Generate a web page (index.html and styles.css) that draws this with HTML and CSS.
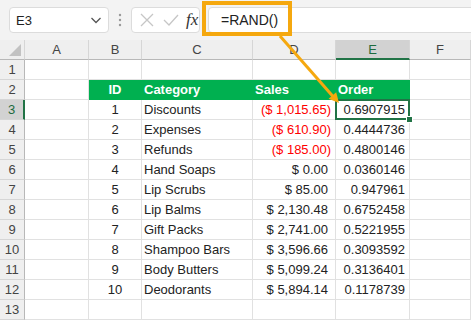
FILE: index.html
```html
<!DOCTYPE html>
<html lang="en">
<head>
    <meta charset="UTF-8">
    <meta name="viewport" content="width=device-width, initial-scale=1.0">
    <title>RAND order</title>
    <link rel="stylesheet" href="styles.css">
</head>
<body>
    <div class="toolbar">
        <div class="namebox">
            <span>E3</span>
            <svg class="chev" width="12" height="8" viewBox="0 0 12 8"><path d="M1.5 2 L6 6.5 L10.5 2" fill="none" stroke="#555" stroke-width="1.3"/></svg>
        </div>
        <div class="grip">
            <svg width="4" height="14" viewBox="0 0 4 14"><circle cx="2" cy="2" r="1.2" fill="#999"/><circle cx="2" cy="7" r="1.2" fill="#999"/><circle cx="2" cy="12" r="1.2" fill="#999"/></svg>
        </div>
        <div class="fxbox">
            <svg width="14" height="14" viewBox="0 0 14 14"><path d="M1 1 L13 13 M13 1 L1 13" stroke="#c6c6c6" stroke-width="1.3"/></svg>
            <svg width="16" height="14" viewBox="0 0 16 14"><path d="M1 7 L6 12 L15 2" fill="none" stroke="#c6c6c6" stroke-width="1.3"/></svg>
            <span class="fx">fx</span>
        </div>
        <div class="formula">=RAND()</div>
    </div>

    <div class="sheet">
        <div class="h corner"></div>
        <div class="h">A</div><div class="h">B</div><div class="h">C</div><div class="h">D</div><div class="h sel">E</div><div class="h">F</div>

        <div class="r">1</div><div class="c"></div><div class="c"></div><div class="c"></div><div class="c"></div><div class="c"></div><div class="c"></div>

        <div class="r">2</div><div class="c"></div>
        <div class="c g mid">ID</div><div class="c g">Category</div><div class="c g">Sales</div><div class="c g">Order</div><div class="c"></div>

        <div class="r sel">3</div><div class="c"></div>
        <div class="c mid">1</div><div class="c">Discounts</div><div class="c num neg">($ 1,015.65)</div><div class="c num active">0.6907915</div><div class="c"></div>

        <div class="r">4</div><div class="c"></div>
        <div class="c mid">2</div><div class="c">Expenses</div><div class="c num neg">($ 610.90)</div><div class="c num">0.4444736</div><div class="c"></div>

        <div class="r">5</div><div class="c"></div>
        <div class="c mid">3</div><div class="c">Refunds</div><div class="c num neg">($ 185.00)</div><div class="c num">0.4800146</div><div class="c"></div>

        <div class="r">6</div><div class="c"></div>
        <div class="c mid">4</div><div class="c">Hand Soaps</div><div class="c num pos">$ 0.00</div><div class="c num">0.0360146</div><div class="c"></div>

        <div class="r">7</div><div class="c"></div>
        <div class="c mid">5</div><div class="c">Lip Scrubs</div><div class="c num pos">$ 85.00</div><div class="c num">0.947961</div><div class="c"></div>

        <div class="r">8</div><div class="c"></div>
        <div class="c mid">6</div><div class="c">Lip Balms</div><div class="c num pos">$ 2,130.48</div><div class="c num">0.6752458</div><div class="c"></div>

        <div class="r">9</div><div class="c"></div>
        <div class="c mid">7</div><div class="c">Gift Packs</div><div class="c num pos">$ 2,741.00</div><div class="c num">0.5221955</div><div class="c"></div>

        <div class="r">10</div><div class="c"></div>
        <div class="c mid">8</div><div class="c">Shampoo Bars</div><div class="c num pos">$ 3,596.66</div><div class="c num">0.3093592</div><div class="c"></div>

        <div class="r">11</div><div class="c"></div>
        <div class="c mid">9</div><div class="c">Body Butters</div><div class="c num pos">$ 5,099.24</div><div class="c num">0.3136401</div><div class="c"></div>

        <div class="r">12</div><div class="c"></div>
        <div class="c mid">10</div><div class="c">Deodorants</div><div class="c num pos">$ 5,894.14</div><div class="c num">0.1178739</div><div class="c"></div>

        <div class="r">13</div><div class="c"></div><div class="c"></div><div class="c"></div><div class="c"></div><div class="c"></div><div class="c"></div>
    </div>

    <!-- callout drawn over the sheet -->
    <svg class="callout" width="471" height="320" viewBox="0 0 471 320">
        <rect x="204" y="3" width="86" height="31" fill="none" stroke="#f5a80f" stroke-width="4"/>
        <line x1="280" y1="36" x2="333" y2="96.5" stroke="#f5a80f" stroke-width="3"/>
        <polygon points="339,103 328.6,98.8 336.2,92.2" fill="#f5a80f"/>
    </svg>
</body>
</html>
```

FILE: styles.css
```css
body {
    margin: 0;
    width: 471px;
    height: 320px;
    overflow: hidden;
    position: relative;
    background: #f3f3f3;
    font-family: "Liberation Sans", Arial, sans-serif;
    color: #222;
}
.toolbar {
    display: flex;
    align-items: center;
    height: 40px;
    padding-left: 9px;
    box-sizing: border-box;
}
.namebox {
    width: 100px;
    height: 26px;
    box-sizing: border-box;
    background: white;
    border: 1px solid #dcdcdc;
    border-radius: 4px;
    display: flex;
    align-items: center;
    justify-content: space-between;
    padding: 0 6px 0 6px;
    font-size: 13px;
}
.grip {
    width: 22px;
    display: flex;
    justify-content: center;
}
.fxbox {
    width: 69px;
    height: 26px;
    box-sizing: border-box;
    background: white;
    border: 1px solid #dcdcdc;
    border-radius: 4px;
    display: flex;
    align-items: center;
    gap: 9px;
    padding-left: 8px;
}
.fx {
    font-family: "Liberation Serif", "DejaVu Serif", serif;
    font-style: italic;
    font-size: 17px;
    color: #333;
    margin-left: -2px;
}
.formula {
    flex: 1;
    margin-left: 8px;
    margin-right: -6px;
    height: 26px;
    box-sizing: border-box;
    background: white;
    border: 1px solid #dcdcdc;
    border-radius: 4px;
    padding-left: 12px;
    font-size: 14px;
    line-height: 24px;
}
.sheet {
    display: grid;
    grid-template-columns: 25px 64px 53px 111px 83px 74px 61px;
    grid-auto-rows: 20px;
    background: white;
    font-size: 13px;
}
.h, .r {
    background: #efefef;
    color: #444;
    font-size: 13px;
    display: flex;
    align-items: center;
    justify-content: center;
    box-sizing: border-box;
}
.h {
    border-right: 1px solid #d6d6d6;
    border-bottom: 1px solid #b8b8b8;
}
.r {
    border-right: 1px solid #b8b8b8;
    border-bottom: 1px solid #d6d6d6;
}
.h.sel {
    background: #d2d2d2;
    color: #1d6b3e;
    border-bottom: 2px solid #217346;
}
.r.sel {
    background: #d2d2d2;
    color: #1d6b3e;
    border-right: 2px solid #217346;
}
.corner {
    position: relative;
}
.corner::after {
    content: "";
    position: absolute;
    right: 3px;
    bottom: 3px;
    width: 12px;
    height: 12px;
    background: #c2c2c2;
    clip-path: polygon(100% 0, 100% 100%, 0 100%);
}
.c {
    box-sizing: border-box;
    border-right: 1px solid #e1e1e1;
    border-bottom: 1px solid #e1e1e1;
    line-height: 20px;
    padding: 0 2px;
    white-space: nowrap;
    overflow: hidden;
}
.mid {
    text-align: center;
}
.num {
    text-align: right;
    padding-right: 4px;
}
.neg {
    color: #ff0000;
}
.pos {
    padding-right: 7px;
}
.g {
    background: #00b050;
    border-color: #00b050;
    color: white;
    font-weight: bold;
}
.active {
    position: relative;
    overflow: visible;
}
.active::after {
    content: "";
    position: absolute;
    left: -1px;
    top: -1px;
    right: -1px;
    bottom: -1px;
    border: 2px solid #217346;
}
.active::before {
    content: "";
    position: absolute;
    right: -4px;
    bottom: -4px;
    width: 5px;
    height: 5px;
    background: #217346;
    border: 1px solid white;
    z-index: 1;
}
.callout {
    position: absolute;
    left: 0;
    top: 0;
    pointer-events: none;
}
```
